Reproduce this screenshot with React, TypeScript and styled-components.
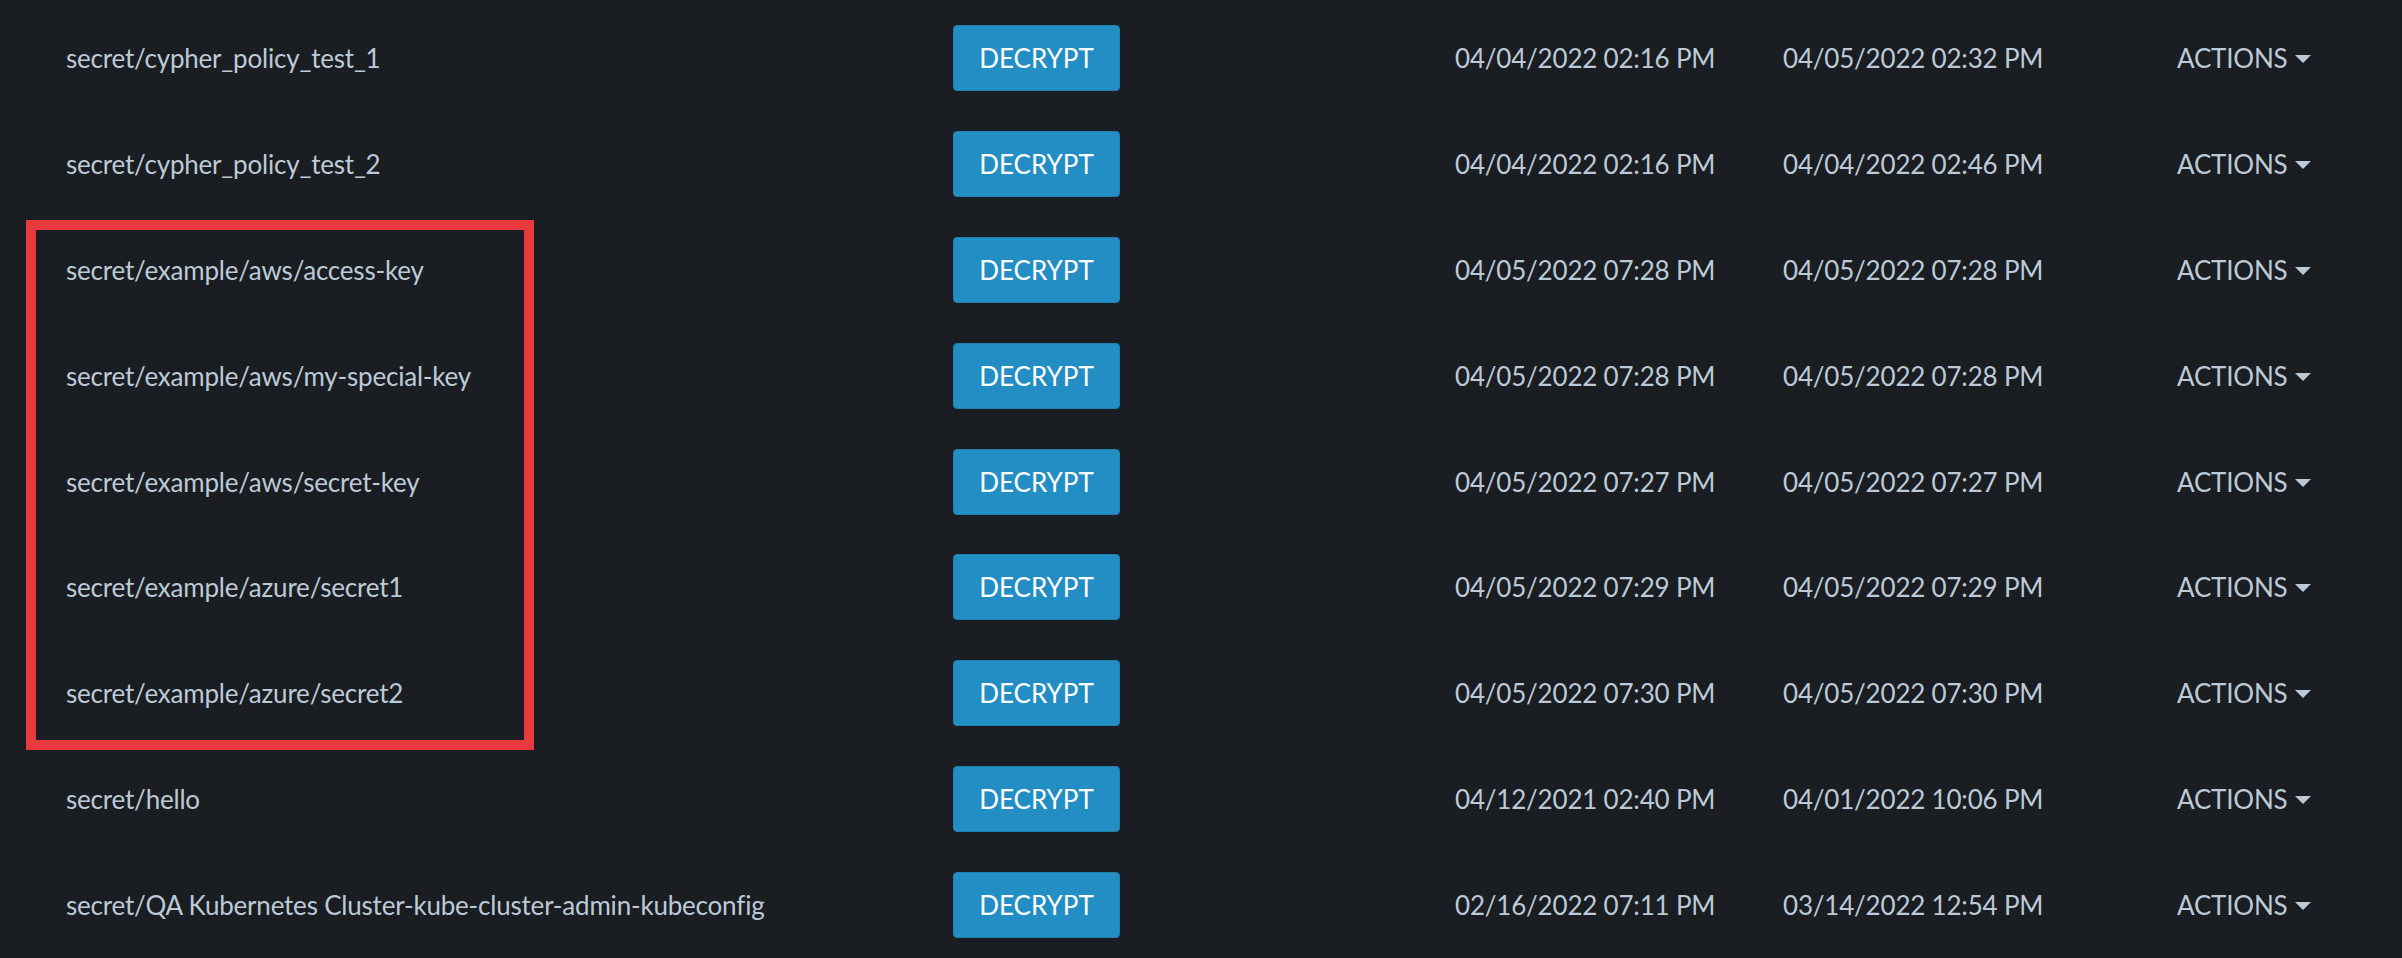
import React from "react";
import styled, { createGlobalStyle } from "styled-components";

const Global = createGlobalStyle`
  html, body {
    margin: 0;
    padding: 0;
    background: #1a1d21;
  }
  body {
    font-family: "Lato", "Noto Sans", sans-serif;
    -webkit-font-smoothing: antialiased;
  }
`;

const Page = styled.div`
  position: relative;
  width: 2402px;
  height: 958px;
  overflow: hidden;
  background: #1a1d21;
  color: #bccad7;
`;

const Table = styled.div`
  display: flex;
  flex-direction: column;
  padding-top: 5px;
`;

const Row = styled.div`
  display: grid;
  grid-template-columns: 66px 887px 502px 328px 394px 1fr;
  align-items: center;
  height: 105.9px;
  font-size: 26px;
  letter-spacing: -0.2px;
`;

const Name = styled.div`
  grid-column: 2;
  white-space: nowrap;
`;

const DateCell = styled.div`
  white-space: nowrap;
`;

const DecryptButton = styled.button`
  width: 167px;
  height: 66px;
  box-sizing: border-box;
  background: #238ec4;
  border: 1px solid #1f80b1;
  border-radius: 4px;
  color: #ffffff;
  font-family: inherit;
  font-size: 26px;
  padding: 0;
  letter-spacing: 0;
  cursor: pointer;
`;

const Actions = styled.div`
  display: flex;
  align-items: center;
  gap: 7px;
  white-space: nowrap;
`;

const Caret = styled.span`
  width: 0;
  height: 0;
  border-left: 8px solid transparent;
  border-right: 8px solid transparent;
  border-top: 8px solid #bccad7;
  margin-top: 2px;
`;

const Highlight = styled.div`
  position: absolute;
  left: 26px;
  top: 220px;
  width: 508px;
  height: 530px;
  box-sizing: border-box;
  border: 10px solid #e9393f;
  pointer-events: none;
`;

const rows = [
  ["secret/cypher_policy_test_1", "04/04/2022 02:16 PM", "04/05/2022 02:32 PM"],
  ["secret/cypher_policy_test_2", "04/04/2022 02:16 PM", "04/04/2022 02:46 PM"],
  ["secret/example/aws/access-key", "04/05/2022 07:28 PM", "04/05/2022 07:28 PM"],
  ["secret/example/aws/my-special-key", "04/05/2022 07:28 PM", "04/05/2022 07:28 PM"],
  ["secret/example/aws/secret-key", "04/05/2022 07:27 PM", "04/05/2022 07:27 PM"],
  ["secret/example/azure/secret1", "04/05/2022 07:29 PM", "04/05/2022 07:29 PM"],
  ["secret/example/azure/secret2", "04/05/2022 07:30 PM", "04/05/2022 07:30 PM"],
  ["secret/hello", "04/12/2021 02:40 PM", "04/01/2022 10:06 PM"],
  ["secret/QA Kubernetes Cluster-kube-cluster-admin-kubeconfig", "02/16/2022 07:11 PM", "03/14/2022 12:54 PM"],
];

export default function App() {
  return (
    <Page>
      <Global />
      <Table>
        {rows.map(([name, created, updated]) => (
          <Row key={name}>
            <Name>{name}</Name>
            <div>
              <DecryptButton>DECRYPT</DecryptButton>
            </div>
            <DateCell>{created}</DateCell>
            <DateCell>{updated}</DateCell>
            <Actions>
              ACTIONS
              <Caret />
            </Actions>
          </Row>
        ))}
      </Table>
      <Highlight />
    </Page>
  );
}
